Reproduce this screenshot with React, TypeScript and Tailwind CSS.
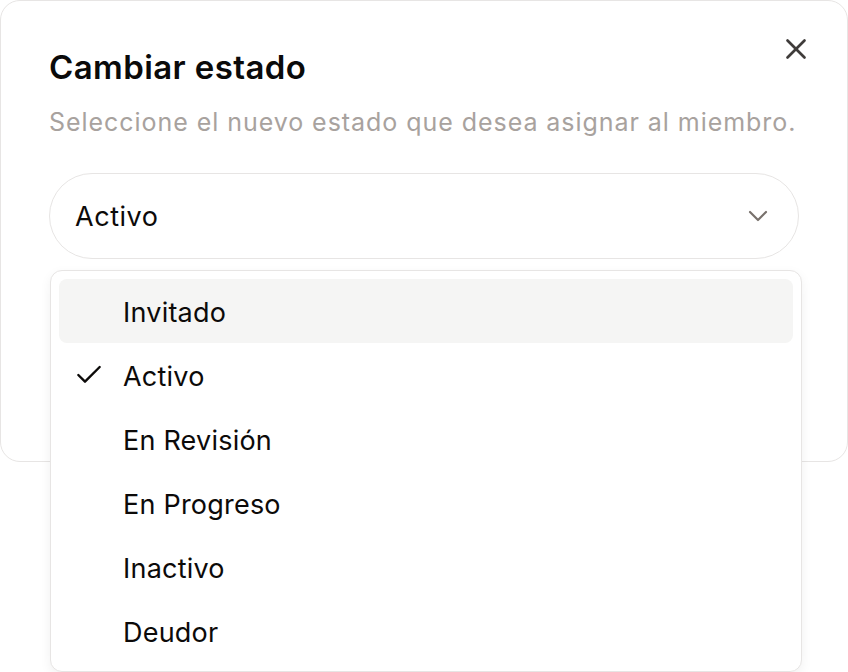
import { Check, ChevronDown, X } from "lucide-react";

const estados = ["Invitado", "Activo", "En Revisión", "En Progreso", "Inactivo", "Deudor"];

export default function App() {
  const selected = "Activo";
  const highlighted = "Invitado";

  return (
    <div className="relative w-[848px] h-[672px] overflow-hidden bg-white font-['Inter',sans-serif] text-[#0c0a09]">
      {/* dialog */}
      <div className="relative flex h-[462px] flex-col rounded-[20px] border border-[#e7e5e4] bg-white px-12 pt-[46px]">
        <h2 className="text-[33px] leading-10 font-semibold tracking-[0.012em] text-[#0a0a0a]">Cambiar estado</h2>
        <p className="mt-[19px] text-[25px] leading-8 tracking-[0.038em] text-[#a8a29e]">
          Seleccione el nuevo estado que desea asignar al miembro.
        </p>
        <button className="mt-[35px] flex h-[86px] w-[750px] items-center justify-between rounded-full border border-[#e7e5e4] bg-white pl-[25px] pr-[24px] text-left">
          <span className="text-[27px] tracking-[0.02em] pt-0.5">{selected}</span>
          <ChevronDown size={32} strokeWidth={1.6} className="text-[#78716c]" />
        </button>
        <button className="absolute right-[34px] top-[31px] text-[#3f3c3a]">
          <X size={34} strokeWidth={1.9} />
        </button>
      </div>

      {/* select menu */}
      <div className="absolute left-[50px] top-[270px] flex w-[752px] h-[402px] flex-col rounded-[12px] border border-[#e7e5e4] bg-white p-2 shadow-[0_4px_12px_rgba(0,0,0,0.06)]">
        {estados.map((e) => (
          <div
            key={e}
            className={`flex h-16 items-center rounded-[8px] ${e === highlighted ? "bg-[#f5f5f4]" : ""}`}
          >
            <span className="flex w-16 shrink-0 pl-[14px]">
              {e === selected && <Check size={32} strokeWidth={1.8} />}
            </span>
            <span className="pt-1 text-[27px] tracking-[0.008em]">{e}</span>
          </div>
        ))}
      </div>
    </div>
  );
}
